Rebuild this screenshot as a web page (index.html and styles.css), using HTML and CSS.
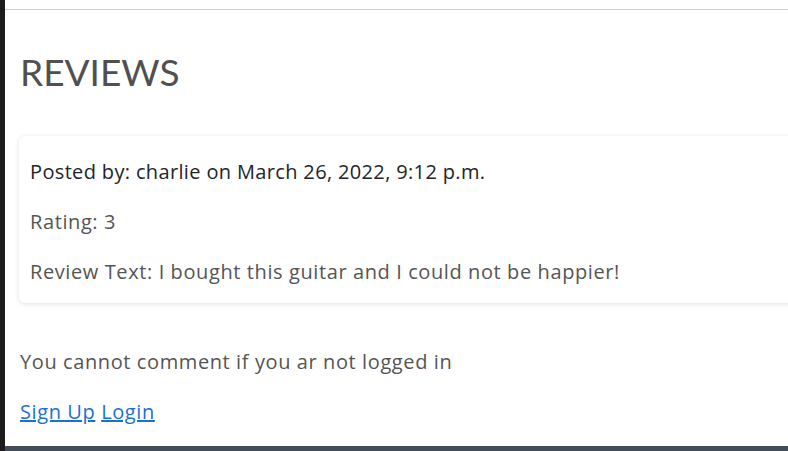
FILE: index.html
```html
<!DOCTYPE html>
<html>
<head>
<meta charset="utf-8">
<link rel="stylesheet" href="styles.css">
</head>
<body>
<div class="page">
  <div class="side"></div>
  <main class="main">
    <div class="topline"></div>
    <h2 class="title">REVIEWS</h2>
    <div class="card">
      <p class="posted">Posted by: charlie on March 26, 2022, 9:12 p.m.</p>
      <p class="line">Rating: 3</p>
      <p class="line">Review Text: I bought this guitar and I could not be happier!</p>
    </div>
    <p class="note">You cannot comment if you ar not logged in</p>
    <p class="links"><a href="#">Sign Up</a> <a href="#">Login</a></p>
    <div class="footer"></div>
  </main>
</div>
</body>
</html>
```
FILE: styles.css
```css
html, body {
  margin: 0;
  padding: 0;
  background: #fff;
}
body {
  font-family: "Open Sans", "Noto Sans", sans-serif;
  overflow: hidden;
  height: 451px;
}
.page {
  display: flex;
  height: 451px;
}
.side {
  width: 5px;
  flex: none;
  background: #1c1c1c;
}
.main {
  flex: 1;
  display: flex;
  flex-direction: column;
  overflow: hidden;
}
.topline {
  margin-top: 9px;
  height: 1px;
  background: #cfcfcf;
  flex: none;
}
.title {
  margin: 38px 0 0 15px;
  font-family: "Lato", sans-serif;
  font-size: 37px;
  font-weight: 400;
  color: #505050;
  line-height: 48px;
}
.card {
  margin: 40px 0 0 14px;
  width: 900px;
  border-radius: 6px;
  box-shadow: 0 1px 5px rgba(0,0,0,0.12);
  padding: 11px 11px 14px;
  box-sizing: border-box;
  height: 167px;
}
.card p {
  margin: 0;
  font-size: 20px;
  letter-spacing: 0.6px;
  line-height: 50px;
}
.card .posted {
  color: #212529;
  letter-spacing: 0.35px;
}
.line { color: #555; }
.note {
  margin: 44px 0 0 15px;
  font-size: 20px;
  letter-spacing: 0.6px;
  line-height: 30px;
  color: #555;
}
.links {
  margin: 20px 0 0 15px;
  font-size: 20px;
  letter-spacing: 0.6px;
  line-height: 30px;
}
.links a { color: #1a6fd8; }
.footer {
  margin-top: auto;
  height: 5px;
  background: #434d59;
  flex: none;
}
```
